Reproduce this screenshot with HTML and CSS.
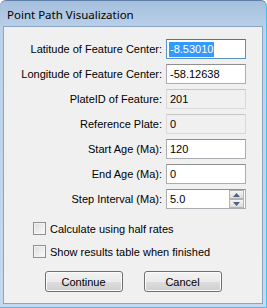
FILE: index.html
```html
<!DOCTYPE html>
<html lang="en">
<head>
    <meta charset="UTF-8">
    <title>Point Path Visualization</title>
    <link rel="stylesheet" href="styles.css">
</head>
<body>
    <div class="window">
        <div class="title-bar">Point Path Visualization</div>

        <div class="client">
            <div class="fields">
                <label for="lat">Latitude of Feature Center:</label>
                <div class="field focused"><span class="selected">-8.53010</span></div>

                <label for="lon">Longitude of Feature Center:</label>
                <div class="field">-58.12638</div>

                <label>PlateID of Feature:</label>
                <div class="field disabled">201</div>

                <label>Reference Plate:</label>
                <div class="field disabled">0</div>

                <label>Start Age (Ma):</label>
                <div class="field">120</div>

                <label>End Age (Ma):</label>
                <div class="field">0</div>

                <label>Step Interval (Ma):</label>
                <div class="field spin">
                    <span>5.0</span>
                    <div class="spin-buttons">
                        <div class="spin-btn">
                            <svg width="7" height="4" viewBox="0 0 7 4"><path d="M0 4 L3.5 0 L7 4 Z" fill="#4d6185"/></svg>
                        </div>
                        <div class="spin-btn">
                            <svg width="7" height="4" viewBox="0 0 7 4"><path d="M0 0 L3.5 4 L7 0 Z" fill="#4d6185"/></svg>
                        </div>
                    </div>
                </div>
            </div>

            <div class="checks">
                <div class="check"><span class="box"></span>Calculate using half rates</div>
                <div class="check"><span class="box"></span>Show results table when finished</div>
            </div>

            <div class="buttons">
                <button class="btn">Continue</button>
                <button class="btn">Cancel</button>
            </div>
        </div>
    </div>
</body>
</html>
```

FILE: styles.css
```css
* {
    margin: 0;
    padding: 0;
    box-sizing: border-box;
}

body {
    font-family: 'Liberation Sans', Arial, sans-serif;
    font-size: 11px;
    color: #000;
    background: #fff;
}

.window {
    width: 267px;
    height: 308px;
    background: linear-gradient(180deg, #a5bfdd 0%, #bcd2ea 30px, #c4d8ee 100%);
    border-radius: 6px 6px 0 0;
    border: 1px solid #5d7ea6;
    border-left: none;
    border-bottom-color: #38c8e8;
    border-right-color: #38c8e8;
    padding: 0 3px 3px 3px;
    display: flex;
    flex-direction: column;
}

.title-bar {
    height: 25px;
    padding: 6px 0 0 4px;
    font-family: 'Noto Sans', 'Open Sans', sans-serif;
    font-size: 11.5px;
    color: #000;
    line-height: 16px;
}

.client {
    flex: 1;
    background: #f0f0f0;
    border: 1px solid #8aa4c4;
    display: flex;
    flex-direction: column;
}

.fields {
    display: grid;
    grid-template-columns: 158px 80px;
    grid-auto-rows: 20px;
    row-gap: 5px;
    column-gap: 4px;
    margin-top: 12px;
    align-items: center;
}

.fields label {
    text-align: right;
    white-space: nowrap;
}

.field {
    height: 20px;
    background: #fff;
    border: 1px solid #abadb3;
    border-top-color: #8e8f8f;
    padding: 0 3px;
    line-height: 18px;
    white-space: nowrap;
}

.field.focused {
    border-color: #5c93bc;
    border-top-color: #3d7bad;
    padding-left: 2px;
}

.selected {
    background: #3399ff;
    color: #fff;
    padding: 1px 1px 2px 1px;
}

.field.disabled {
    background: #f0f0f0;
    border-color: #d9d9d9;
    border-top-color: #c6c6c6;
}

.field.spin {
    display: flex;
    justify-content: space-between;
    padding-right: 1px;
}

.spin-buttons {
    display: flex;
    flex-direction: column;
}

.spin-btn {
    width: 15px;
    height: 9px;
    background: linear-gradient(180deg, #f4f4f4, #dcdcdc);
    border: 1px solid #b4b4b4;
    display: flex;
    align-items: center;
    justify-content: center;
}

.checks {
    display: flex;
    flex-direction: column;
    gap: 10px;
    margin: 13px 0 0 29px;
}

.check {
    display: flex;
    align-items: center;
    gap: 4px;
    height: 13px;
}

.box {
    width: 13px;
    height: 13px;
    border: 1px solid #8e8f8f;
    background: linear-gradient(135deg, #dcdcdc, #fbfbfb);
    box-shadow: inset 0 0 0 1px #f4f4f4;
}

.buttons {
    display: flex;
    justify-content: center;
    gap: 21px;
    margin-top: 13px;
}

.btn {
    width: 78px;
    height: 21px;
    font-family: 'Liberation Sans', Arial, sans-serif;
    font-size: 11px;
    color: #000;
    border: 1px solid #707070;
    border-radius: 3px;
    background: linear-gradient(180deg, #f2f2f2 0%, #ebebeb 50%, #dddddd 51%, #cfcfcf 100%);
    box-shadow: inset 0 0 0 1px #fcfcfc;
}
```
